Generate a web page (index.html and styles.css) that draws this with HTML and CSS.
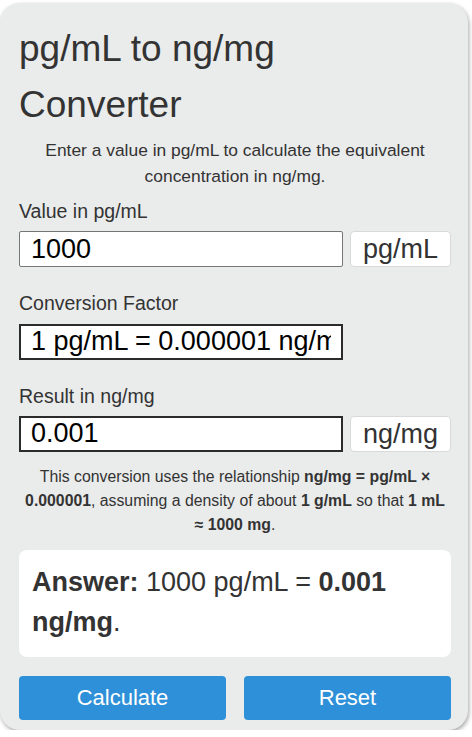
FILE: index.html
```html
<!DOCTYPE html>
<html lang="en">
<head>
 <meta charset="UTF-8" />
 <title>pg/mL to ng/mg Converter</title>
 <link rel="stylesheet" href="styles.css">
</head>
<body>
 <div class="calculator">
   <h1>pg/mL to ng/mg Converter</h1>
   <p class="intro">Enter a value in pg/mL to calculate the equivalent concentration in ng/mg.</p>

   <label for="value">Value in pg/mL</label>
   <div class="row">
     <input type="text" id="value" value="1000" />
     <span class="unit">pg/mL</span>
   </div>

   <label for="factor">Conversion Factor</label>
   <div class="row">
     <input type="text" id="factor" class="readonly" value="1 pg/mL = 0.000001 ng/mg" readonly />
   </div>

   <label for="result">Result in ng/mg</label>
   <div class="row last">
     <input type="text" id="result" class="readonly" value="0.001" readonly />
     <span class="unit">ng/mg</span>
   </div>

   <p class="note">This conversion uses the relationship <b>ng/mg = pg/mL ×</b> <b>0.000001</b>, assuming a density of about <b>1 g/mL</b> so that <b>1 mL</b> <b>≈ 1000 mg</b>.</p>

   <div class="answer" id="answer"><b>Answer:</b> 1000 pg/mL = <b>0.001</b> <b>ng/mg</b>.</div>

   <div class="buttons">
     <button onclick="calculate()">Calculate</button>
     <button onclick="resetForm()">Reset</button>
   </div>
 </div>

 <script>
   function calculate() {
     const value = parseFloat(document.getElementById("value").value);
     if (isNaN(value)) return;
     const result = +(value * 0.000001).toPrecision(12);
     document.getElementById("result").value = result;
     document.getElementById("answer").innerHTML =
       "<b>Answer:</b> " + value + " pg/mL = <b>" + result + "</b> <b>ng/mg</b>.";
   }

   function resetForm() {
     document.getElementById("value").value = "";
     document.getElementById("result").value = "";
     document.getElementById("answer").innerHTML = "";
   }
 </script>
</body>
</html>
```

FILE: styles.css
```css
body {
  font-family: "Liberation Sans", Arial, sans-serif;
  background: #fff;
  color: #333;
  margin: 0;
  padding-top: 3px;
}

.calculator {
  width: 468px;
  box-sizing: border-box;
  background: #eaebeb;
  border-radius: 20px;
  box-shadow: 1px 2px 4px rgba(0,0,0,0.35);
  padding: 18px 17px 10px 19px;
  line-height: 1.5;
}

h1 {
  max-width: 380px;
  font-size: 37px;
  font-weight: normal;
  line-height: 55.5px;
  margin: 0 0 5px;
}

.intro {
  font-size: 17.4px;
  text-align: center;
  margin: 0 0 8px;
}

label {
  display: block;
  font-size: 19.5px;
  margin-bottom: 5px;
}

.row {
  display: flex;
  gap: 7px;
  margin-bottom: 22px;
}

.row.last {
  margin-bottom: 13px;
}

input[type="text"] {
  width: 324px;
  height: 36px;
  box-sizing: border-box;
  padding: 0 10px 0 11px;
  font-family: "Liberation Sans", Arial, sans-serif;
  font-size: 27px;
  color: #000;
  background: #fff;
  border: 1px solid #767676;
  border-radius: 2px;
}

input.readonly {
  border: 2px solid #2b2b2b;
  border-radius: 0;
  padding-left: 10px;
}

.unit {
  width: 102px;
  height: 36px;
  box-sizing: border-box;
  background: #fff;
  border: 1px solid #d9d9d9;
  border-radius: 4px;
  font-size: 27px;
  line-height: 34px;
  text-align: center;
}

.note {
  font-size: 15.8px;
  line-height: 24px;
  text-align: center;
  margin: 0 0 13px;
}

.answer {
  background: #fff;
  border-radius: 8px;
  padding: 12px 13px 14px;
  font-size: 27px;
  line-height: 40.5px;
  margin-bottom: 19px;
}

.buttons {
  display: flex;
  gap: 18px;
}

.buttons button {
  flex: 1;
  height: 44px;
  background-color: #2e90d8;
  color: #fff;
  border: none;
  border-radius: 4px;
  font-family: "Liberation Sans", Arial, sans-serif;
  font-size: 22px;
  cursor: pointer;
}

.buttons button:hover {
  background-color: #2479b8;
}
```
